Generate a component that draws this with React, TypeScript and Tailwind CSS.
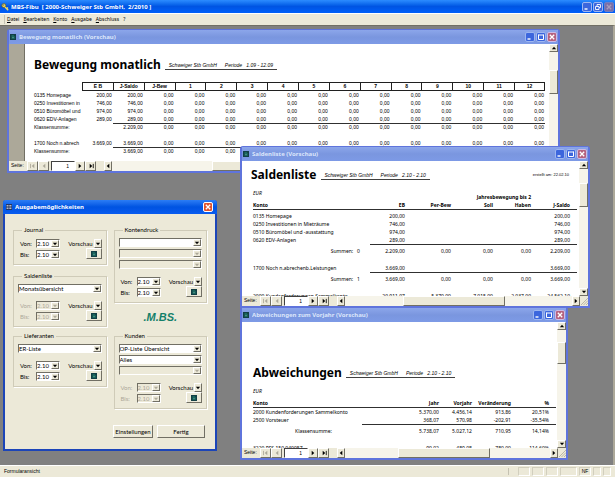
import type { ReactNode } from "react";
import { useId } from "react";
import clsx from "clsx";

const MONTHS = ["1", "2", "3", "4", "5", "6", "7", "8", "9", "10", "11", "12"];
const MENU = ["Datei", "Bearbeiten", "Konto", "Ausgabe", "Abschluss", "?"];

// ── Small glyphs ─────────────────────────────────────────────────────

function Arrow({ dir, bar = false }: { dir: "up" | "down" | "left" | "right"; bar?: boolean }) {
  const paths = {
    up: "M1 5 L3.5 2 L6 5 Z",
    down: "M1 2 L6 2 L3.5 5 Z",
    left: "M5 1 L2 3.5 L5 6 Z",
    right: "M2 1 L5 3.5 L2 6 Z",
  };
  return (
    <svg viewBox="0 0 7 7" className="h-[6px] w-[6px] shrink-0" fill="currentColor" aria-hidden>
      <path d={paths[dir]} />
      {bar && <rect x={dir === "left" ? 0 : 5.6} y="1" width="1" height="5" />}
    </svg>
  );
}

function ReportIcon() {
  return (
    <svg viewBox="0 0 6 6" className="h-[6px] w-[6px] shrink-0" aria-hidden>
      <rect width="6" height="6" fill="#123f45" />
      <path d="M1.5 1 H3.5 L4.7 2.2 V5 H1.5 Z" fill="#1d6a60" />
      <path d="M2 3.5 H4" stroke="#6aa898" strokeWidth="0.5" />
    </svg>
  );
}

function FormIcon() {
  return (
    <svg viewBox="0 0 6 6" className="h-[6px] w-[6px] shrink-0" aria-hidden>
      <rect width="6" height="6" fill="#26365f" />
      <path d="M0.6 1.5 H2.5 M3.3 1.5 H5.4 M0.6 3 H2.5 M3.3 3 H5.4 M0.6 4.5 H2.5 M3.3 4.5 H5.4" stroke="#d5dcea" strokeWidth="0.8" />
    </svg>
  );
}

function KeyIcon() {
  return (
    <svg viewBox="0 0 8 8" className="h-2 w-2 shrink-0" aria-hidden>
      <circle cx="2.8" cy="2.6" r="2" fill="#e9d45a" stroke="#5b5414" strokeWidth="0.6" />
      <circle cx="2.2" cy="2" r="0.6" fill="#0a3a9c" />
      <path d="M4 4 L7.2 7.2 M5.6 5.8 L6.9 4.6" stroke="#f0dc62" strokeWidth="1.4" />
    </svg>
  );
}

function CaptionButton({ kind, active = false }: { kind: "min" | "max" | "restore" | "close"; active?: boolean }) {
  return (
    <button
      type="button"
      aria-label={kind}
      className={clsx(
        "flex h-[10px] w-[10px] items-center justify-center rounded-[2px] border",
        kind === "close"
          ? active
            ? "border-white bg-[#e0532e]"
            : "border-[#cdbbe6] bg-[#b5627f]"
          : "border-[#9db6f0] bg-[#3c66dd]"
      )}
    >
      <svg viewBox="0 0 8 8" className="h-2 w-2" stroke="#fff" fill="none" aria-hidden>
        {kind === "min" && <path d="M1.5 6 H4.5" strokeWidth="1.4" />}
        {kind === "max" && <path d="M1.5 2 H6.5 M1.5 1.5 V6.5 H6.5 V1.5" strokeWidth="1" />}
        {kind === "restore" && <path d="M3 3 V1.5 H6.5 V4.5 H5 M1.5 3.5 H5 V6.5 H1.5 Z" strokeWidth="0.9" />}
        {kind === "close" && <path d="M1.8 1.8 L6.2 6.2 M6.2 1.8 L1.8 6.2" strokeWidth="1.3" />}
      </svg>
    </button>
  );
}

// ── Classic controls ─────────────────────────────────────────────────

const RAISED =
  "flex items-center justify-center border border-t-white border-l-white border-r-[#716f64] border-b-[#716f64] bg-[#ece9d8]";

function VScroll({ thumb }: { thumb: string }) {
  return (
    <div className="flex w-[9px] shrink-0 flex-col bg-[#f6f4ea]">
      <button type="button" aria-label="Nach oben" className={clsx(RAISED, "h-2 shrink-0")}>
        <Arrow dir="up" />
      </button>
      <div className="flex-1">
        <div className={clsx(RAISED, thumb)} />
      </div>
      <button type="button" aria-label="Nach unten" className={clsx(RAISED, "h-2 shrink-0")}>
        <Arrow dir="down" />
      </button>
    </div>
  );
}

function NavBar({ thumb }: { thumb: string }) {
  const id = useId();
  return (
    <div className="flex h-[10px] shrink-0 items-stretch bg-[#ece9d8] text-[5px]">
      <label htmlFor={id} className="w-[18px] pl-[2px] leading-[9px]">Seite:</label>
      <button type="button" aria-label="Erste Seite" className={clsx(RAISED, "w-[11px] text-[#aca899]")}>
        <Arrow dir="left" bar />
      </button>
      <button type="button" aria-label="Vorige Seite" className={clsx(RAISED, "w-[11px] text-[#aca899]")}>
        <Arrow dir="left" />
      </button>
      <input
        id={id}
        defaultValue="1"
        className="ml-[2px] w-6 border border-t-[#404040] border-l-[#404040] border-r-white border-b-white bg-white pr-[5px] text-right leading-[8px]"
      />
      <button type="button" aria-label="Nächste Seite" className={clsx(RAISED, "w-[10px]")}>
        <Arrow dir="right" />
      </button>
      <button type="button" aria-label="Letzte Seite" className={clsx(RAISED, "w-[11px]")}>
        <Arrow dir="right" bar />
      </button>
      <div className="ml-2 flex flex-1 bg-[#f6f4ea]">
        <button type="button" aria-label="Nach links" className={clsx(RAISED, "w-2")}>
          <Arrow dir="left" />
        </button>
        <div className="flex flex-1">
          <div className={clsx(RAISED, thumb)} />
        </div>
        <button type="button" aria-label="Nach rechts" className={clsx(RAISED, "w-2")}>
          <Arrow dir="right" />
        </button>
      </div>
      <svg viewBox="0 0 8 10" className="h-[10px] w-2" stroke="#aca899" strokeWidth="0.8" aria-hidden>
        <path d="M1 9 L8 2 M3.5 9 L8 4.5 M6 9 L8 7" />
      </svg>
    </div>
  );
}

interface PreviewProps {
  title: string;
  /** Position and size on the desktop */
  place: string;
  vThumb: string;
  hThumb: string;
  margin?: boolean;
  children: ReactNode;
}

function PreviewWindow({ title, place, vThumb, hThumb, margin = false, children }: PreviewProps) {
  return (
    <section className={clsx("absolute flex flex-col rounded-t-[3px] border-2 border-t border-[#5f74dc] bg-white", place)}>
      <header className="flex h-[14px] shrink-0 items-center gap-[3px] bg-linear-to-b from-[#8ca6ea] via-[#7a96df] to-[#7d9ae6] pr-px pl-[1px] text-white">
        <ReportIcon />
        <h2 className="flex-1 truncate font-['Noto_Sans'] text-[6px] leading-[10px] font-bold text-[#dce6fb]">{title}</h2>
        <div className="flex gap-px">
          <CaptionButton kind="min" />
          <CaptionButton kind="max" />
          <CaptionButton kind="close" />
        </div>
      </header>
      <div className="flex min-h-0 flex-1">
        {margin && <div className="w-4 shrink-0 border-r border-[#716f64] bg-[#aca899]" />}
        <div className="min-w-0 flex-1 overflow-hidden">{children}</div>
        <VScroll thumb={vThumb} />
      </div>
      <NavBar thumb={hThumb} />
    </section>
  );
}

function ReportHead({ title, period }: { title: string; period: string }) {
  return (
    <div className="flex items-center gap-1 leading-4">
      <h3 className="font-['Noto_Sans'] text-[12px] font-bold">{title}</h3>
      <p className="mt-[2px] flex gap-2 border-b border-[#404040] px-1 text-[5px] leading-[7px] italic">
        <span>Schweiger Stb GmbH</span>
        <span>Periode&nbsp;&nbsp; {period}</span>
      </p>
    </div>
  );
}

// ── Reports ──────────────────────────────────────────────────────────

function MonthRow({ name, eb = "", saldo, sum = false }: { name: string; eb?: string; saldo: string; sum?: boolean }) {
  const cell = clsx("border-t p-0 pr-px", sum ? "border-[#303030]" : "border-transparent");
  return (
    <tr className="h-2">
      <th scope="row" className="p-0 text-left font-normal whitespace-nowrap">{name}</th>
      <td className="p-0 pr-px">{eb}</td>
      <td className={cell}>{saldo}</td>
      {["bew", ...MONTHS].map((m) => (
        <td key={m} className={cell}>0,00</td>
      ))}
    </tr>
  );
}

function Bewegung() {
  return (
    <div className="pt-[13px] pr-1 pl-[9px]">
      <ReportHead title="Bewegung monatlich" period="1.09 - 12.09" />
      <table className="mt-[9px] w-full table-fixed border-separate border-spacing-0 text-right text-[5px] leading-[7px]">
        <colgroup>
          <col className="w-12" />
        </colgroup>
        <thead>
          <tr className="h-[9px]">
            <td className="p-0" />
            {["E B", "J-Saldo", "J-Bew", ...MONTHS].map((h) => (
              <th key={h} className="border-y border-l border-[#202020] p-0 text-center last:border-r">{h}</th>
            ))}
          </tr>
        </thead>
        <tbody>
          <MonthRow name="0135 Homepage" eb="200,00" saldo="200,00" />
          <MonthRow name="0250 Investitionen in" eb="746,00" saldo="746,00" />
          <MonthRow name="0510 Büromöbel und" eb="974,00" saldo="974,00" />
          <MonthRow name="0620 EDV-Anlagen" eb="289,00" saldo="289,00" />
          <MonthRow name="Klassensumme:" saldo="2.209,00" sum />
          <tr className="h-2" />
          <MonthRow name="1700 Noch n.abrech" eb="3.669,00" saldo="3.669,00" />
          <MonthRow name="Klassensumme:" saldo="3.669,00" sum />
        </tbody>
      </table>
    </div>
  );
}

interface LedgerRow {
  kind: "row" | "sum" | "gap";
  name?: string;
  values?: string[];
}

const SALDEN: LedgerRow[] = [
  { kind: "row", name: "0135 Homepage", values: ["200,00", "", "", "", "200,00"] },
  { kind: "row", name: "0250 Investitionen in Mieträume", values: ["746,00", "", "", "", "746,00"] },
  { kind: "row", name: "0510 Büromöbel und -ausstattung", values: ["974,00", "", "", "", "974,00"] },
  { kind: "row", name: "0620 EDV-Anlagen", values: ["289,00", "", "", "", "289,00"] },
  { kind: "sum", name: "Summen:   0", values: ["2.209,00", "0,00", "0,00", "0,00", "2.209,00"] },
  { kind: "gap" },
  { kind: "row", name: "1700 Noch n.abrechenb.Leistungen", values: ["3.669,00", "", "", "", "3.669,00"] },
  { kind: "sum", name: "Summen:   1", values: ["3.669,00", "0,00", "0,00", "0,00", "3.669,00"] },
  { kind: "gap" },
  { kind: "row", name: "2000 Kundenforderungen Sammelkonto", values: ["20.911,07", "5.370,00", "7.015,00", "2.037,00", "24.562,10"] },
];

const ABWEICHUNGEN: LedgerRow[] = [
  { kind: "row", name: "2000 Kundenforderungen Sammelkonto", values: ["5.370,00", "4.456,14", "913,86", "20,51%"] },
  { kind: "row", name: "2500 Vorsteuer", values: ["368,07", "570,98", "-202,91", "-35,54%"] },
  { kind: "sum", name: "Klassensumme:", values: ["5.738,07", "5.027,12", "710,95", "14,14%"] },
  { kind: "gap" },
  { kind: "row", name: "3220 PFS 150.040057", values: ["90,02", "489,08", "780,00", "114,60%"] },
];

function LedgerBody({ rows }: { rows: LedgerRow[] }) {
  return (
    <tbody>
      {rows.map((row, i) => {
        if (row.kind === "gap") return <tr key={i} className="h-[9px]" />;
        const sum = row.kind === "sum";
        const cell = clsx("p-0 align-bottom", sum && "border-t border-[#303030]");
        return (
          <tr key={i} className={sum ? "h-[11px]" : "h-2"}>
            <th
              scope="row"
              className={clsx("p-0 align-bottom font-normal whitespace-pre", sum ? "text-right" : "text-left")}
            >
              {row.name}
            </th>
            <td className="p-0" />
            {row.values?.map((v, k) => (
              <td key={k} className={cell}>{v}</td>
            ))}
            <td className={cell} />
          </tr>
        );
      })}
    </tbody>
  );
}

const LEDGER =
  "w-full table-fixed border-separate border-spacing-0 text-right font-['Noto_Sans'] text-[5px] leading-[8px]";
const HEAD_CELL = "border-b border-[#303030] p-0";

function Saldenliste() {
  return (
    <div className="pt-[6px] pr-[2px] pl-[9px]">
      <div className="flex items-center justify-between pr-2">
        <ReportHead title="Saldenliste" period="2.10 - 2.10" />
        <span className="text-[4px] leading-[6px]">erstellt am: 22.02.10</span>
      </div>
      <div className="mt-[6px] pl-[2px]">
        <table className={LEDGER}>
          <colgroup>
            <col />
            <col className="w-[10px]" />
            <col className="w-[35px]" />
            <col className="w-[46px]" />
            <col className="w-[42px]" />
            <col className="w-[38px]" />
            <col className="w-[39px]" />
            <col className="w-[7px]" />
          </colgroup>
          <thead>
            <tr className="h-3">
              <td colSpan={4} className="p-0 text-left align-top italic">EUR</td>
              <th colSpan={2} className="p-0 text-right align-bottom whitespace-nowrap">Jahresbewegung bis 2</th>
              <td colSpan={2} />
            </tr>
            <tr className="h-[9px]">
              <th colSpan={2} className={clsx(HEAD_CELL, "text-left")}>Konto</th>
              <th className={HEAD_CELL}>EB</th>
              <th className={HEAD_CELL}>Per-Bew</th>
              <th className={HEAD_CELL}>Soll</th>
              <th className={HEAD_CELL}>Haben</th>
              <th className={HEAD_CELL}>J-Saldo</th>
              <td className={HEAD_CELL} />
            </tr>
            <tr className="h-[2px]" />
          </thead>
          <LedgerBody rows={SALDEN} />
        </table>
      </div>
    </div>
  );
}

function Abweichungen() {
  return (
    <div className="pt-[43px] pr-px pl-[11px]">
      <ReportHead title="Abweichungen" period="2.10 - 2.10" />
      <table className={clsx(LEDGER, "mt-[6px]")}>
        <colgroup>
          <col />
          <col className="w-[30px]" />
          <col className="w-[77px]" />
          <col className="w-[33px]" />
          <col className="w-[39px]" />
          <col className="w-[38px]" />
          <col className="w-[7px]" />
        </colgroup>
        <thead>
          <tr className="h-3">
            <td colSpan={7} className="p-0 text-left align-top italic">EUR</td>
          </tr>
          <tr className="h-[9px]">
            <th colSpan={2} className={clsx(HEAD_CELL, "text-left")}>Konto</th>
            <th className={HEAD_CELL}>Jahr</th>
            <th className={HEAD_CELL}>Vorjahr</th>
            <th className={HEAD_CELL}>Veränderung</th>
            <th className={HEAD_CELL}>%</th>
            <td className={HEAD_CELL} />
          </tr>
        </thead>
        <LedgerBody rows={ABWEICHUNGEN} />
      </table>
    </div>
  );
}

// ── Output dialog ────────────────────────────────────────────────────

interface ComboProps {
  label: string;
  value?: string;
  disabled?: boolean;
  className?: string;
}

function Combo({ label, value = "", disabled = false, className = "w-full" }: ComboProps) {
  return (
    <div
      className={clsx(
        "flex h-[9px] border border-t-[#716f64] border-l-[#716f64] border-r-white border-b-white",
        disabled ? "bg-[#ece9d8] text-[#aca899]" : "bg-white",
        className
      )}
    >
      <select
        aria-label={label}
        disabled={disabled}
        defaultValue={value}
        className="min-w-0 flex-1 appearance-none bg-transparent p-0 leading-[7px]"
      >
        <option value={value}>{value}</option>
      </select>
      <span className={clsx(RAISED, "w-2 shrink-0")}>
        <Arrow dir="down" />
      </span>
    </div>
  );
}

function PeriodPicker({ group, disabled = false }: { group: string; disabled?: boolean }) {
  return (
    <div className="flex justify-between">
      <div className={clsx("space-y-[2px]", disabled && "text-[#aca899]")}>
        {["Von:", "Bis:"].map((l) => (
          <div key={l} className="flex items-center">
            <span className="w-[18px] pl-[2px]">{l}</span>
            <Combo label={`${group} ${l}`} value="2.10" disabled={disabled} className="w-6" />
          </div>
        ))}
      </div>
      <div className="flex flex-col items-end">
        <div className="flex items-center gap-px">
          <span>Vorschau</span>
          <button type="button" aria-label={`${group} Ausgabeart`} className={clsx(RAISED, "h-[9px] w-2")}>
            <Arrow dir="down" />
          </button>
        </div>
        <button type="button" aria-label={`${group} drucken`} className={clsx(RAISED, "h-[11px] w-4")}>
          <ReportIcon />
        </button>
      </div>
    </div>
  );
}

interface GroupProps {
  title: string;
  combos?: { value?: string; disabled?: boolean }[];
  off?: boolean;
}

function Group({ title, combos = [], off = false }: GroupProps) {
  return (
    <fieldset className="min-w-0 border border-[#cfcbb8] px-1 pb-[5px] shadow-[1px_1px_0_#fff]">
      <legend className="ml-1 px-[2px] leading-[6px]">{title}</legend>
      {combos.length > 0 && (
        <div className="space-y-[2px] pt-[5px] pb-[2px]">
          {combos.map((c, i) => (
            <Combo key={i} label={`${title} Auswahl ${i + 1}`} value={c.value} disabled={c.disabled} />
          ))}
        </div>
      )}
      <div className="pt-[6px]">
        <PeriodPicker group={title} disabled={off} />
      </div>
    </fieldset>
  );
}

function OutputDialog() {
  return (
    <section className="absolute top-[174px] left-[3px] flex w-[214px] flex-col rounded-t-[3px] border-2 border-t-0 border-[#1c45b8] bg-[#ece9d8] pb-[11px] font-['Lato'] text-[6px] leading-[8px]">
      <header className="-mx-[2px] flex h-[14px] shrink-0 items-center gap-[3px] rounded-t-[3px] bg-linear-to-b from-[#2b7df5] via-[#0053e1] to-[#0a5cf0] pr-1 pl-[3px]">
        <FormIcon />
        <h2 className="flex-1 font-['Noto_Sans'] font-bold text-white">Ausgabemöglichkeiten</h2>
        <CaptionButton kind="close" active />
      </header>
      <div className="grid grid-cols-2 gap-x-[7px] gap-y-[6px] px-2 pt-[13px]">
        <div className="flex flex-col gap-2">
          <Group title="Journal" />
          <Group title="Saldenliste" combos={[{ value: "Monatsübersicht" }]} off />
        </div>
        <div className="flex flex-col">
          <Group title="Kontendruck" combos={[{}, { disabled: true }, { disabled: true }]} />
          <p className="flex flex-1 items-center justify-center pt-1 font-['Liberation_Sans'] text-[11px] font-bold text-[#14806a] italic">
            .M.BS.
          </p>
        </div>
        <div>
          <Group title="Lieferanten" combos={[{ value: "ER-Liste" }]} />
        </div>
        <div>
          <Group
            title="Kunden"
            combos={[{ value: "OP-Liste Übersicht" }, { value: "Alles" }, { disabled: true }]}
            off
          />
        </div>
      </div>
      <div className="mt-4 flex justify-end gap-1 pr-[10px]">
        <button type="button" className={clsx(RAISED, "h-[13px] w-10")}>Einstellungen</button>
        <button type="button" className={clsx(RAISED, "h-[13px] w-12")}>Fertig</button>
      </div>
    </section>
  );
}

// ── Application shell ────────────────────────────────────────────────

const STATUS = [
  { text: "", width: "w-3" },
  { text: "", width: "w-3" },
  { text: "", width: "w-3" },
  { text: "", width: "w-[17px]" },
  { text: "NF", width: "w-3" },
  { text: "", width: "w-2" },
  { text: "", width: "w-2" },
];

export default function App() {
  return (
    <div className="flex h-screen flex-col overflow-hidden bg-[#ece9d8] font-['Liberation_Sans',sans-serif] text-black">
      <header className="flex h-[13px] shrink-0 items-center gap-[2px] bg-linear-to-b from-[#2c8cff] via-[#0054e3] to-[#0060fa] pr-px pl-px">
        <KeyIcon />
        <h1 className="flex-1 font-['Noto_Sans'] text-[6px] leading-[10px] font-bold whitespace-pre text-white">
          MBS-Fibu  [ 2000-Schweiger Stb GmbH,  2/2010 ]
        </h1>
        <div className="flex gap-px">
          <CaptionButton kind="min" />
          <CaptionButton kind="restore" />
          <button
            type="button"
            aria-label="close"
            disabled
            className="flex h-[10px] w-[10px] items-center justify-center rounded-[2px] border border-[#6f7fc4] bg-[#7a6fa8]"
          >
            <svg viewBox="0 0 8 8" className="h-2 w-2" stroke="#a99cbc" strokeWidth="1.3" aria-hidden>
              <path d="M1.8 1.8 L6.2 6.2 M6.2 1.8 L1.8 6.2" />
            </svg>
          </button>
        </div>
      </header>

      <nav className="flex h-3 shrink-0 items-center gap-[4px] border-t border-white pl-1 font-['Noto_Sans'] text-[5px]">
        <span className="-mr-[2px] h-[9px] w-px bg-[#c5c2b2]" />
        {MENU.map((m) => (
          <a key={m} href="#" className="first-letter:underline">{m}</a>
        ))}
      </nav>

      <main className="relative min-h-0 flex-1 overflow-hidden border-t border-r-2 border-t-[#716f64] border-r-[#aca899] bg-[#808080]">
        <PreviewWindow
          title="Bewegung monatlich (Vorschau)"
          place="top-[3px] left-[7px] h-[144px] w-[553px]"
          vThumb="mt-[18px] h-6"
          hThumb="ml-[100px] w-[160px]"
          margin
        >
          <Bewegung />
        </PreviewWindow>
        <PreviewWindow
          title="Saldenliste (Vorschau)"
          place="top-[120px] left-[240px] h-[162px] w-[350px]"
          vThumb="mt-[14px] h-6"
          hThumb="ml-[58px] w-[102px]"
        >
          <Saldenliste />
        </PreviewWindow>
        <PreviewWindow
          title="Abweichungen zum Vorjahr (Vorschau)"
          place="top-[281px] left-[240px] h-[153px] w-[328px]"
          vThumb="mt-3 h-[22px]"
          hThumb="ml-[53px] w-[92px]"
        >
          <Abweichungen />
        </PreviewWindow>
        <OutputDialog />
      </main>

      <footer className="flex h-3 shrink-0 items-center gap-[2px] border-t border-white px-1 text-[5px]">
        <span className="mr-[7px] flex-1 border-r border-[#c5c2b2]">Formularansicht</span>
        {STATUS.map((s, i) => (
          <span
            key={i}
            className={clsx(
              "h-[9px] border border-t-[#d2cfbe] border-l-[#d2cfbe] border-r-white border-b-white text-center leading-[7px]",
              s.width
            )}
          >
            {s.text}
          </span>
        ))}
      </footer>
    </div>
  );
}
